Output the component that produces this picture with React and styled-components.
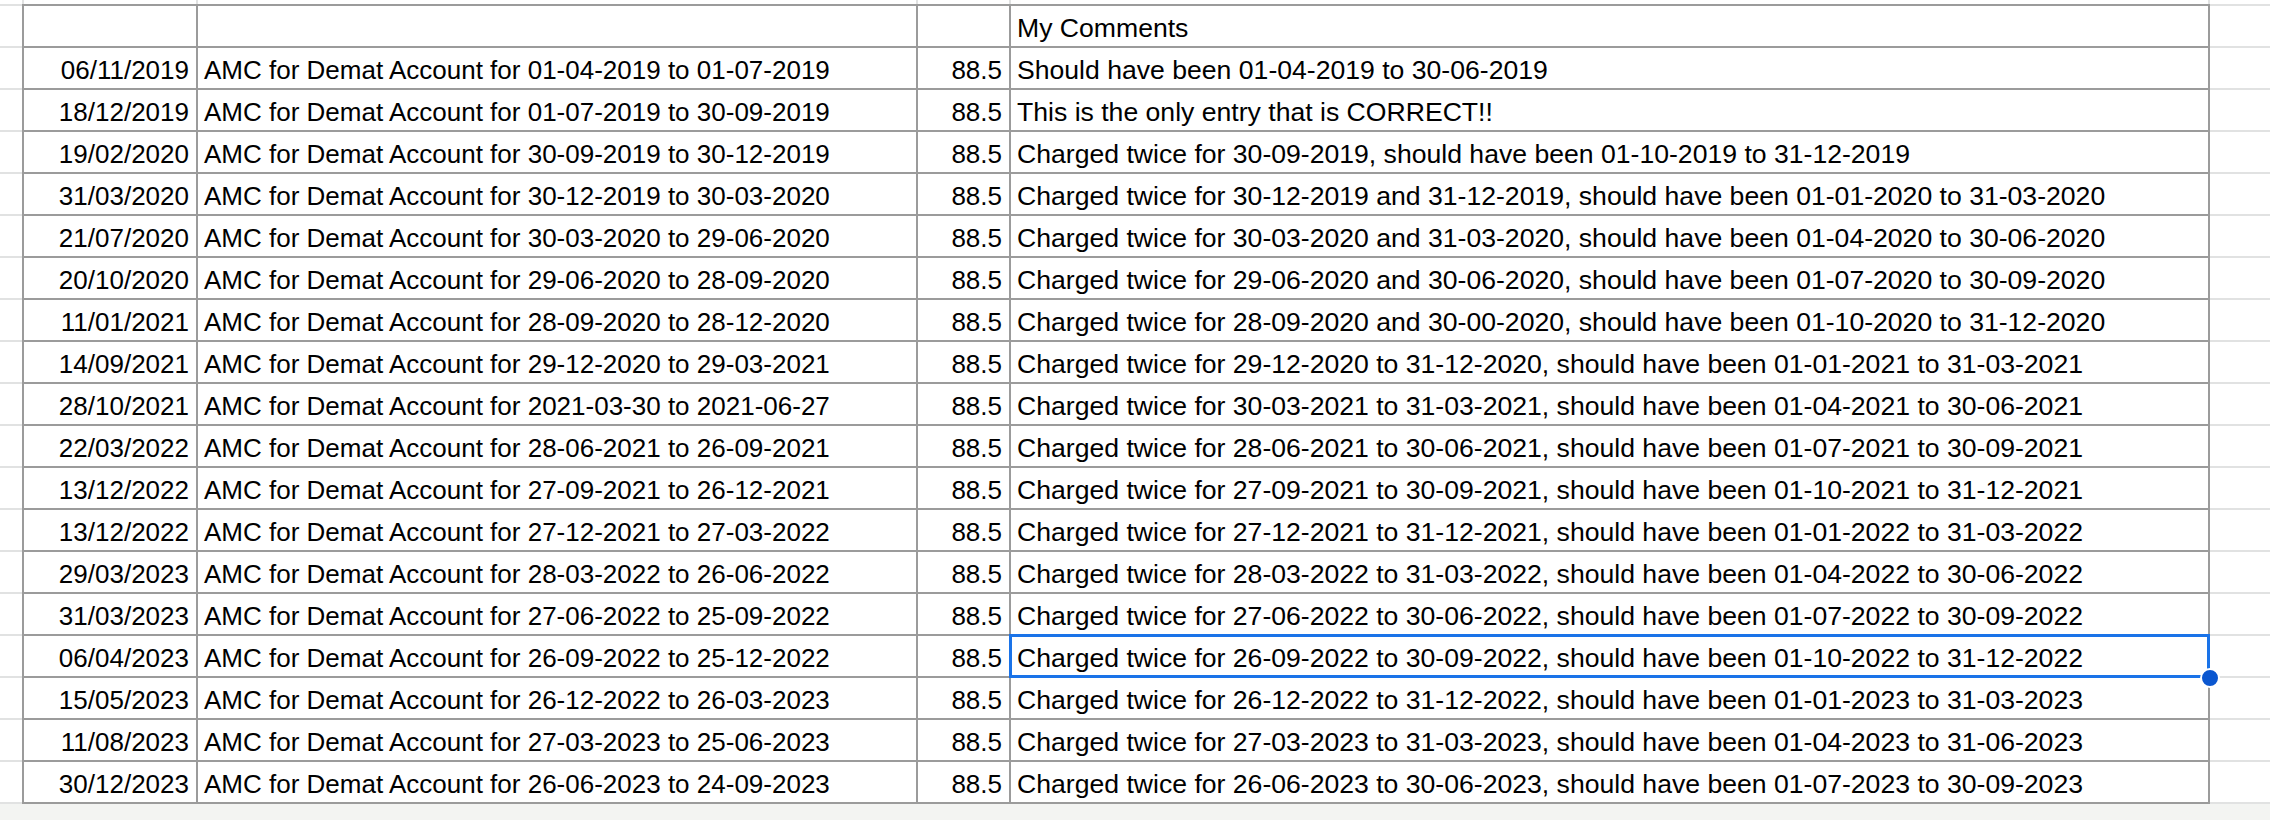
import React from "react";
import styled, {createGlobalStyle, css} from "styled-components";

const dark = "#9b9b9b";
const light = "#e1e2e2";
const blue = "#1a73e8";

const GlobalStyle = createGlobalStyle`
html, body {
margin: 0;
padding: 0;
background: #f3f4f2;
}
body {
font-family: "Liberation Sans", Arial, sans-serif;
color: #000;
}
`;

const Sheet = styled.div`
width: 2270px;
background: #fff;
`;

const Row = styled.div`
display: grid;
grid-template-columns: 22px 174px 720px 93px 1201px 1fr;
height: ${({$header}) => ($header ? "44px" : "42px")};
`;

const TopStrip = styled.div`
display: grid;
grid-template-columns: 22px 174px 720px 93px 1201px 1fr;
height: 4px;
`;

const StripCell = styled.div`
border-left: ${({$edge}) => ($edge ? `2px solid ${light}` : "none")};
border-right: ${({$last}) => ($last ? `2px solid ${light}` : "none")};
`;

const Outside = styled.div`
border-bottom: 2px solid ${light};
${({$header}) =>
    $header &&
    css`
      border-top: 2px solid ${light};
    `}
`;

const Cell = styled.div`
position: relative;
display: flex;
align-items: flex-end;
justify-content: ${({$right}) => ($right ? "flex-end" : "flex-start")};
padding: 0 ${({$right}) => ($right ? "7px" : "6px")} 5px 6px;
border-left: 2px solid ${dark};
border-bottom: 2px solid ${dark};
font-size: 26px;
line-height: 26px;
white-space: nowrap;

${({$last}) =>
    $last &&
    css`
      border-right: 2px solid ${dark};
      font-size: 26.6px;
    `}
${({$header}) =>
    $header &&
    css`
      border-top: 2px solid ${dark};
    `}
`;

const Selection = styled.div`
position: absolute;
top: -2px;
left: -2px;
right: -2px;
bottom: -2px;
border: 3px solid ${blue};
pointer-events: none;
z-index: 2;
`;

const Handle = styled.div`
position: absolute;
right: -12px;
bottom: -12px;
width: 16px;
height: 16px;
border-radius: 50%;
background: #0b57d0;
border: 2px solid #fff;
z-index: 3;
`;

const rows = [
  ["06/11/2019", "01-04-2019 to 01-07-2019", "Should have been 01-04-2019 to 30-06-2019"],
  ["18/12/2019", "01-07-2019 to 30-09-2019", "This is the only entry that is CORRECT!!"],
  ["19/02/2020", "30-09-2019 to 30-12-2019", "Charged twice for 30-09-2019, should have been 01-10-2019 to 31-12-2019"],
  ["31/03/2020", "30-12-2019 to 30-03-2020", "Charged twice for 30-12-2019 and 31-12-2019, should have been 01-01-2020 to 31-03-2020"],
  ["21/07/2020", "30-03-2020 to 29-06-2020", "Charged twice for 30-03-2020 and 31-03-2020, should have been 01-04-2020 to 30-06-2020"],
  ["20/10/2020", "29-06-2020 to 28-09-2020", "Charged twice for 29-06-2020 and 30-06-2020, should have been 01-07-2020 to 30-09-2020"],
  ["11/01/2021", "28-09-2020 to 28-12-2020", "Charged twice for 28-09-2020 and 30-00-2020, should have been 01-10-2020 to 31-12-2020"],
  ["14/09/2021", "29-12-2020 to 29-03-2021", "Charged twice for 29-12-2020 to 31-12-2020, should have been 01-01-2021 to 31-03-2021"],
  ["28/10/2021", "2021-03-30 to 2021-06-27", "Charged twice for 30-03-2021 to 31-03-2021, should have been 01-04-2021 to 30-06-2021"],
  ["22/03/2022", "28-06-2021 to 26-09-2021", "Charged twice for 28-06-2021 to 30-06-2021, should have been 01-07-2021 to 30-09-2021"],
  ["13/12/2022", "27-09-2021 to 26-12-2021", "Charged twice for 27-09-2021 to 30-09-2021, should have been 01-10-2021 to 31-12-2021"],
  ["13/12/2022", "27-12-2021 to 27-03-2022", "Charged twice for 27-12-2021 to 31-12-2021, should have been 01-01-2022 to 31-03-2022"],
  ["29/03/2023", "28-03-2022 to 26-06-2022", "Charged twice for 28-03-2022 to 31-03-2022, should have been 01-04-2022 to 30-06-2022"],
  ["31/03/2023", "27-06-2022 to 25-09-2022", "Charged twice for 27-06-2022 to 30-06-2022, should have been 01-07-2022 to 30-09-2022"],
  ["06/04/2023", "26-09-2022 to 25-12-2022", "Charged twice for 26-09-2022 to 30-09-2022, should have been 01-10-2022 to 31-12-2022"],
  ["15/05/2023", "26-12-2022 to 26-03-2023", "Charged twice for 26-12-2022 to 31-12-2022, should have been 01-01-2023 to 31-03-2023"],
  ["11/08/2023", "27-03-2023 to 25-06-2023", "Charged twice for 27-03-2023 to 31-03-2023, should have been 01-04-2023 to 31-06-2023"],
  ["30/12/2023", "26-06-2023 to 24-09-2023", "Charged twice for 26-06-2023 to 30-06-2023, should have been 01-07-2023 to 30-09-2023"],
];

const selectedRow = 14;

export default function App(){
    return(
        <>
            <GlobalStyle/>
            <Sheet>
                <TopStrip>
                    <StripCell/>
                    <StripCell $edge/>
                    <StripCell $edge/>
                    <StripCell $edge/>
                    <StripCell $edge $last/>
                    <StripCell/>
                </TopStrip>
                <Row $header>
                    <Outside $header/>
                    <Cell $header/>
                    <Cell $header/>
                    <Cell $header/>
                    <Cell $header $last>My Comments</Cell>
                    <Outside $header/>
                </Row>
                {rows.map(([date, period, comment], i) => (
                    <Row key={i}>
                        <Outside/>
                        <Cell $right>{date}</Cell>
                        <Cell>AMC for Demat Account for {period}</Cell>
                        <Cell $right>88.5</Cell>
                        <Cell $last>
                            {comment}
                            {i === selectedRow && (
                                <>
                                    <Selection/>
                                    <Handle/>
                                </>
                            )}
                        </Cell>
                        <Outside/>
                    </Row>
                ))}
            </Sheet>
        </>
    )
}
